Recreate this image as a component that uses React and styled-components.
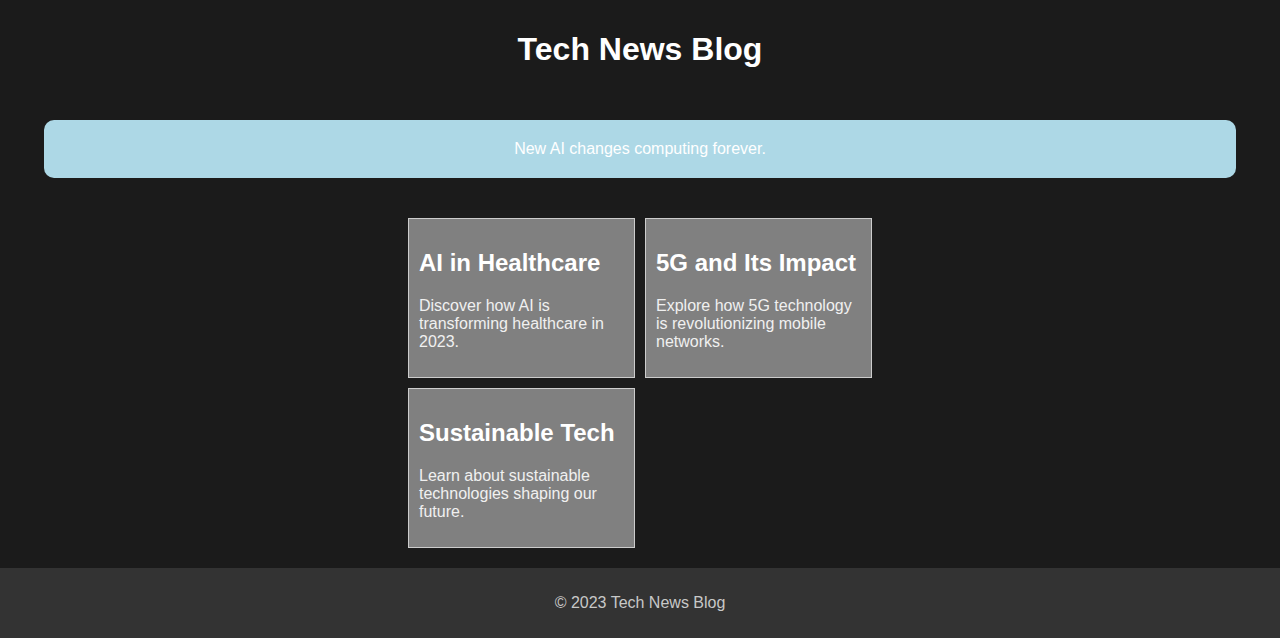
import React from "react";
import styled, { createGlobalStyle } from "styled-components";

const posts = [
  {
    id: "ai",
    title: "AI in Healthcare",
    summary: "Discover how AI is transforming healthcare in 2023.",
  },
  {
    id: "5g",
    title: "5G and Its Impact",
    summary: "Explore how 5G technology is revolutionizing mobile networks.",
  },
  {
    id: "green",
    title: "Sustainable Tech",
    summary: "Learn about sustainable technologies shaping our future.",
  },
];

const GlobalStyle = createGlobalStyle`
  body {
    margin: 0;
    background: #1b1b1b;
    color: #ffffff;
    font-family: "Liberation Sans", Arial, sans-serif;
  }
`;

const Header = styled.header`
  padding: 10px;
  text-align: center;
`;

const Title = styled.h1`
  font-size: 32px;
  font-weight: bold;
  margin: 21px 0 22px;
`;

const Banner = styled.div`
  background: #add8e6;
  border-radius: 10px;
  color: #ffffff;
  margin: 20px 44px 0;
  padding: 20px;
  text-align: center;
  font-size: 16px;
  line-height: 18px;
`;

const PostGrid = styled.section`
  display: grid;
  grid-template-columns: repeat(2, 227px);
  gap: 10px;
  justify-content: center;
  margin: 40px 0 20px;
`;

const Card = styled.article`
  box-sizing: border-box;
  height: 160px;
  background: #808080;
  border: 1px solid #cccccc;
  padding: 10px;
`;

const CardTitle = styled.h2`
  font-size: 24px;
  font-weight: bold;
  margin: 20px 0;
  line-height: 28px;
  color: #ffffff;
`;

const CardText = styled.p`
  font-size: 16px;
  line-height: 18px;
  margin: 0;
  color: #f0f0f0;
`;

const Footer = styled.footer`
  background: #333333;
  color: #c8c8c8;
  text-align: center;
  padding: 26px 0;
  font-size: 16px;
  line-height: 18px;
`;

export default function App() {
  return (
    <>
      <GlobalStyle />
      <Header>
        <Title>Tech News Blog</Title>
      </Header>
      <Banner>New AI changes computing forever.</Banner>
      <PostGrid>
        {posts.map((post) => (
          <Card key={post.id}>
            <CardTitle>{post.title}</CardTitle>
            <CardText>{post.summary}</CardText>
          </Card>
        ))}
      </PostGrid>
      <Footer>© 2023 Tech News Blog</Footer>
    </>
  );
}
